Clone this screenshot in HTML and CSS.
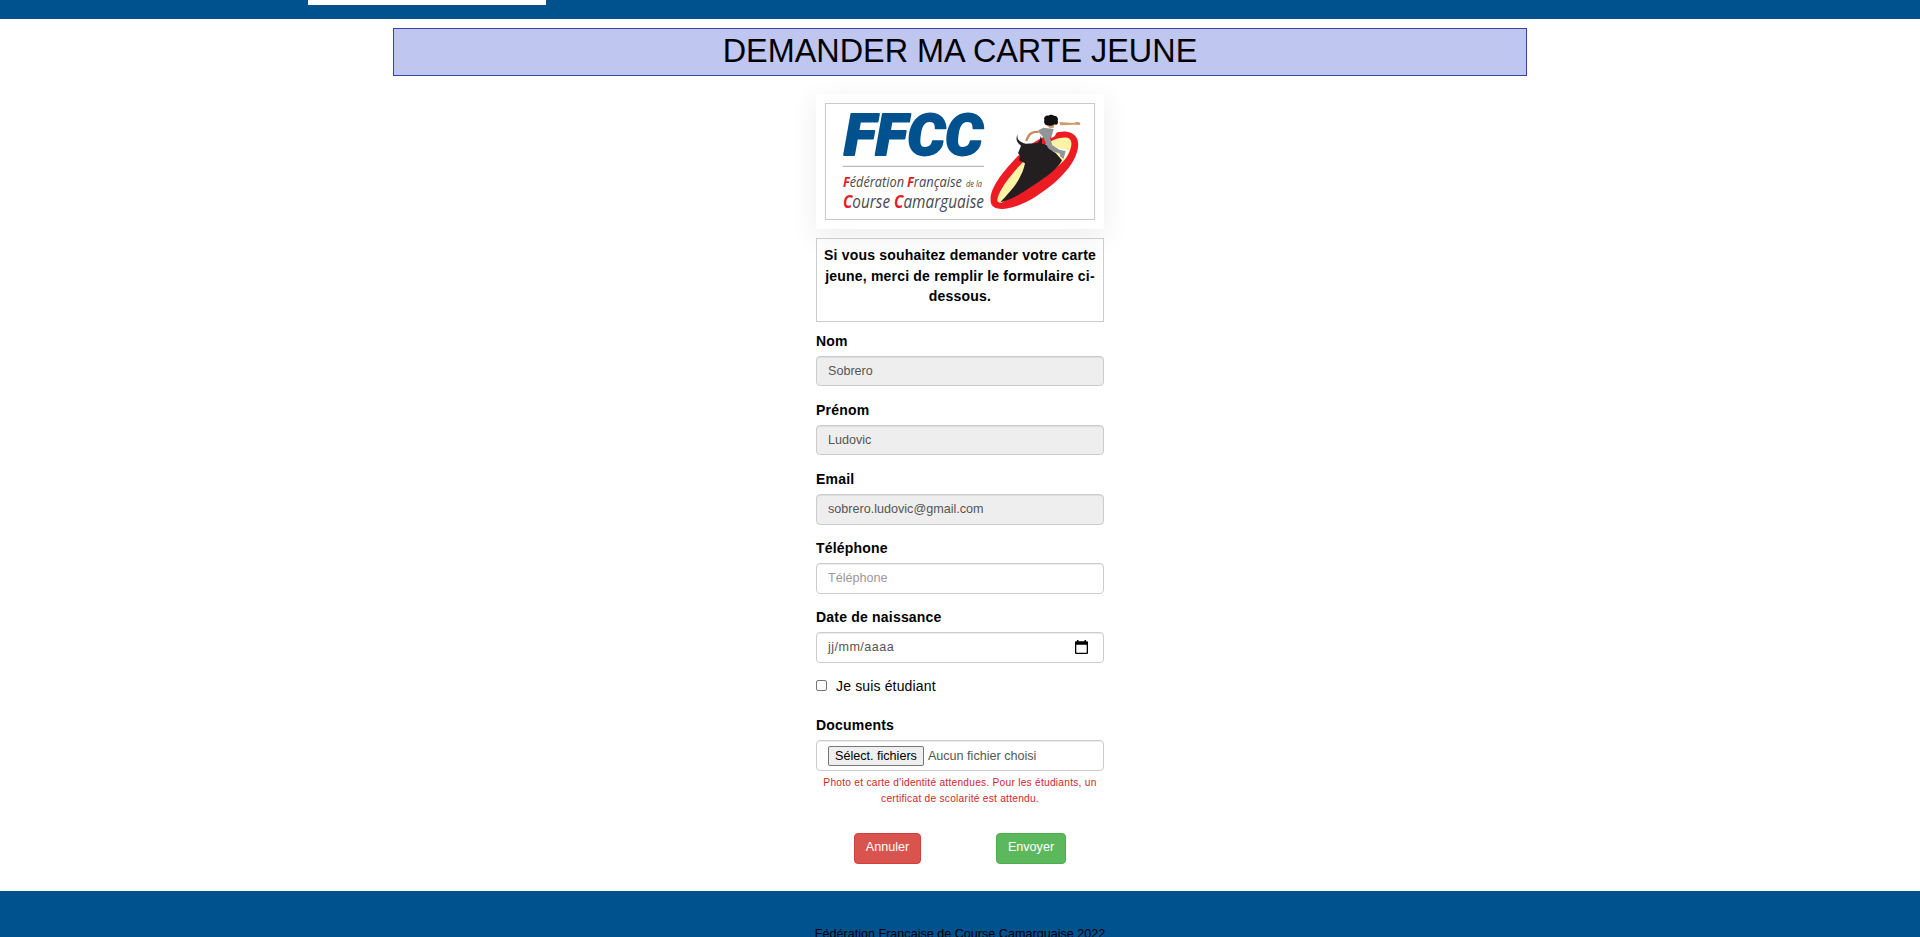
FILE: index.html
```html
<!DOCTYPE html>
<html lang="fr">
<head>
<meta charset="utf-8">
<title>Demander ma carte jeune</title>
<link rel="stylesheet" href="styles.css">
</head>
<body>
<header class="topbar"><div class="topbar-logo"></div></header>
<main>
  <h1 class="page-title"><span>DEMANDER MA CARTE JEUNE</span></h1>
  <div class="column">
    <div class="logo-card">
      <svg class="logo" viewBox="826 104 268 115" role="img" aria-label="FFCC">
        <g class="logo-name">
          <text x="844" y="155" textLength="139" lengthAdjust="spacingAndGlyphs">FFCC</text>
        </g>
        <path d="M842.500 166.300H984" stroke="#aaa" stroke-width="1"/>
        <g class="logo-line1">
          <text x="843" y="187.300" textLength="61" lengthAdjust="spacingAndGlyphs"><tspan class="initial">F</tspan>édération</text>
          <text x="907" y="187.300" textLength="55" lengthAdjust="spacingAndGlyphs"><tspan class="initial">F</tspan>rançaise</text>
          <text class="small" x="966" y="187.300" textLength="16" lengthAdjust="spacingAndGlyphs">de la</text>
        </g>
        <g class="logo-line2">
          <text x="843" y="208.300" textLength="47" lengthAdjust="spacingAndGlyphs"><tspan class="initial">C</tspan>ourse</text>
          <text x="894" y="208.300" textLength="90" lengthAdjust="spacingAndGlyphs"><tspan class="initial">C</tspan>amarguaise</text>
        </g>
        <g transform="translate(970 100) scale(.33333)" fill="none">
          <path fill="#ed1c24" d="M62 302C58 270 92 222 140 172C190 120 245 92 290 95C325 100 333 130 316 170C296 215 240 268 170 305C130 325 100 330 80 325C67 321 62 312 62 302Z"/>
          <path fill="#fff3a6" d="M82 303C82 278 118 228 150 196C195 150 250 108 292 113C310 118 306 142 294 165C280 188 262 200 245 214L95 308Q84 309 82 303Z"/>
          <path fill="#231f20" d="M155 133C172 129 190 131 202 129C208 126 212 118 211 108C217 117 217 126 215 131C231 132 246 143 252 153L276 181C264 207 230 230 196 252C160 276 125 300 91 307C106 289 130 266 144 242C154 225 162 207 165 190L147 181L150 166L144 160Z"/>
          <path fill="#231f20" d="M144 103C138 115 148 126 167 131L158 139C142 133 134 116 144 103Z"/>
          <path stroke="#c68a5a" stroke-width="7" d="M206 96C186 94 176 101 169 123"/>
          <path fill="#fff" d="M240 136C256 146 280 145 296 153L286 174L274 171L272 159C252 162 240 150 240 136Z"/>
          <path fill="#929497" d="M205 91L220 83L251 87L249 106L240 113L247 136L270 150L287 153L281 176L271 170L270 161C250 155 236 151 230 136L220 111L208 99Z"/>
          <path fill="#fff" d="M250 91L264 80L272 67V76L254 109L243 115Z"/>
          <path fill="#d59b6d" d="M230 70H255L251 83L240 85L232 78Z"/>
          <path fill="#111" d="M223 59C220 51 229 46 235 47C241 42 248 46 252 47C261 46 266 55 263 62C267 71 259 77 253 73C243 80 237 77 232 76C224 75 221 67 223 59Z"/>
          <path fill="#d09a6c" d="M269 66L310 69L321 65L331 68L330 75L311 74L270 76Z"/>
        </g>
      </svg>
    </div>
    <div class="notice">Si vous souhaitez demander votre carte jeune, merci de remplir le formulaire ci-dessous.</div>
    <form>
      <div class="group"><label>Nom</label><div class="control disabled short">Sobrero</div></div>
      <div class="group"><label>Prénom</label><div class="control disabled short">Ludovic</div></div>
      <div class="group"><label>Email</label><div class="control disabled">sobrero.ludovic@gmail.com</div></div>
      <div class="group"><label>Téléphone</label><div class="control placeholder">Téléphone</div></div>
      <div class="group"><label>Date de naissance</label>
        <div class="control date"><span>jj/mm/aaaa</span>
          <svg width="13" height="14" viewBox="0 0 13 14"><path fill="#000" fill-rule="evenodd" d="M2 0H3.500V1.300H9.500V0H11V1.300H12Q13 1.300 13 2.300V13Q13 14 12 14H1Q0 14 0 13V2.300Q0 1.300 1 1.300H2ZM1.300 4.700V12.700H11.700V4.700Z"/></svg>
        </div>
      </div>
      <div class="check"><span class="box"></span><span class="check-text">Je suis étudiant</span></div>
      <div class="documents"><label>Documents</label>
        <div class="control file"><span class="file-button">Sélect. fichiers</span><span>Aucun fichier choisi</span></div>
      </div>
      <p class="help">Photo et carte d'identité attendues. Pour les étudiants, un certificat de scolarité est attendu.</p>
      <div class="actions"><div class="btn cancel">Annuler</div><div class="btn send">Envoyer</div></div>
    </form>
  </div>
</main>
<footer class="footer">Fédération Française de Course Camarguaise 2022</footer>
</body>
</html>
```
FILE: styles.css
```css
* { box-sizing: border-box; }
body {
  margin: 0;
  height: 937px;
  overflow: hidden;
  background: #fff;
  color: #000;
  font-family: "Liberation Sans", Arial, sans-serif;
  font-size: 14px;
  letter-spacing: .2px;
}
.topbar { height: 19px; background: #00528f; padding-left: 308px; }
.topbar-logo { width: 238px; height: 5px; background: #fff; }
main { height: 872px; padding-top: 9px; }
.page-title {
  width: 1134px;
  height: 48px;
  margin: 0 auto;
  border: 1px solid #3445a4;
  background: #bfc6f0;
  text-align: center;
  font-size: 32.4px;
  font-weight: 400;
  line-height: 45px;
  letter-spacing: 0;
}
.column { width: 288px; margin: 18px auto 0; }
.logo-card {
  height: 135px;
  padding: 9px;
  background: #fff;
  box-shadow: 0 7px 27px rgba(0, 0, 0, .08);
}
.logo { display: block; width: 270px; height: 117px; border: 1px solid #c8c9cc; overflow: visible; }
.logo-name {
  font: italic 900 57.5px Roboto, sans-serif;
  fill: #00528f;
  stroke: #00528f;
  stroke-width: 1.8px;
  stroke-linejoin: round;
  letter-spacing: 0;
}
.logo-line1, .logo-line2 { font-family: "Open Sans", sans-serif; font-style: italic; fill: #4a4a4c; letter-spacing: 0; }
.logo-line1 { font-size: 14.5px; }
.logo-line2 { font-size: 17.5px; }
.logo-line1 .small { font-size: 9.5px; }
.initial { fill: #e31e26; font-weight: 700; }
.notice {
  height: 84px;
  margin-top: 9px;
  padding: 6px 4px;
  border: 1px solid #ccc;
  text-align: center;
  font-weight: 700;
  line-height: 20.5px;
}
form { padding-top: 10px; }
.group { height: 69px; }
label { display: block; height: 24px; line-height: 19px; font-weight: 700; }
.control {
  display: flex;
  align-items: center;
  height: 31px;
  padding: 0 11px 2px;
  border: 1px solid #ccc;
  border-radius: 4px;
  box-shadow: inset 0 1px 1px rgba(0, 0, 0, .075);
  color: #555;
  font-size: 12.6px;
  letter-spacing: 0;
}
.short { height: 30px; padding-bottom: 0; }
.disabled { background: #eee; }
.placeholder { color: #999; }
.date { justify-content: space-between; padding-right: 15px; letter-spacing: .45px; }
.date svg { margin-top: 1px; }
.check { display: flex; align-items: center; gap: 9px; height: 20px; margin-top: -2px; letter-spacing: .15px; }
.check-text { padding-top: 2px; }
.box { width: 11px; height: 11px; border: 1px solid #767676; border-radius: 2px; }
.documents { margin-top: 21px; }
.file { padding-bottom: 0; gap: 4px; }
.file-button {
  height: 20px;
  padding: 0 6px;
  border: 1px solid #767676;
  border-radius: 2px;
  background: #efefef;
  color: #000;
  line-height: 18px;
}
.help { margin: 4px 0 0; color: #d01f2a; font-size: 10.2px; letter-spacing: .25px; line-height: 16px; text-align: center; }
.actions { display: flex; gap: 75px; margin: 26px 0 0 38px; }
.btn {
  height: 31px;
  border: 1px solid #d43f3a;
  border-radius: 4px;
  color: #fff;
  font-size: 12.6px;
  letter-spacing: 0;
  line-height: 26px;
  text-align: center;
}
.cancel { width: 67px; background: #d9534f; }
.send { width: 70px; background: #5cb85c; border-color: #4cae4c; }
.footer { height: 46px; background: #00528f; padding-top: 35px; font-size: 12.6px; letter-spacing: 0; line-height: 17px; text-align: center; }
```
